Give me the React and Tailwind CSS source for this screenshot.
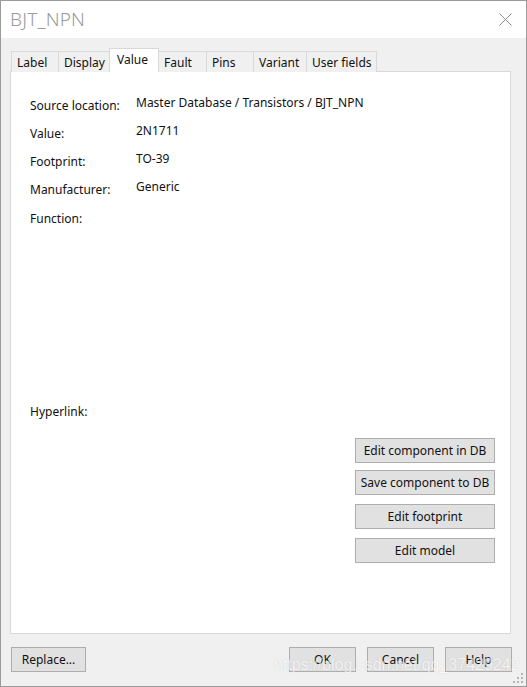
import React from 'react';

const tabs = ['Label', 'Display', 'Value', 'Fault', 'Pins', 'Variant', 'User fields'];
const tabWidths = ['w-[48px]', 'w-[52px]', 'w-[50px]', 'w-[49px]', 'w-[48px]', 'w-[54px]', 'w-[71px]'];

const fields = [
  { label: 'Source location:', value: 'Master Database / Transistors / BJT_NPN' },
  { label: 'Value:', value: '2N1711' },
  { label: 'Footprint:', value: 'TO-39' },
  { label: 'Manufacturer:', value: 'Generic' },
];

const Btn = ({ children, className }) => (
  <button className={`h-[25px] border border-[#adadad] bg-[#e1e1e1] text-[12px] text-[#111] flex items-center justify-center ${className}`}>
    {children}
  </button>
);

const App = () => {
  return (
    <div className="w-[527px] h-[687px] border border-[#9b9b9b] flex flex-col relative overflow-hidden font-['Noto_Sans',sans-serif] text-[12px] text-[#111]">
      {/* Title bar */}
      <div className="h-[37px] bg-white flex items-center justify-between pl-[9px] pr-[14px] shrink-0">
        <span className="text-[19px] font-light text-[#9a9a9a] tracking-[0.2px]">BJT_NPN</span>
        <svg width="13" height="13" viewBox="0 0 13 13">
          <path d="M0.5 0.5 L12.5 12.5 M12.5 0.5 L0.5 12.5" stroke="#8c8c8c" strokeWidth="1" />
        </svg>
      </div>

      {/* Body */}
      <div className="flex-1 bg-[#f0f0f0] pl-[9px] pr-[15px] pt-[10px] flex flex-col">
        {/* Tabs */}
        <div className="flex items-end h-[24px] pl-[1px] relative z-10">
          {tabs.map((t, i) =>
            t === 'Value' ? (
              <div key={t} className={`${tabWidths[i]} h-[24px] -ml-px bg-white border border-b-0 border-[#d9d9d9] flex items-center pl-[7px] pb-[2px] relative z-10`}>
                {t}
              </div>
            ) : (
              <div key={t} className={`${tabWidths[i]} h-[21px] bg-[#f0f0f0] border border-b-0 border-[#d9d9d9] -ml-px first:ml-0 flex items-center pl-[5px] pt-[1px]`}>
                {t}
              </div>
            )
          )}
        </div>

        {/* Panel */}
        <div className="h-[563px] -mt-px bg-white border border-[#d9d9d9] flex flex-col pl-[19px] pr-[15px] pt-[22px]">
          {fields.map((f) => (
            <div key={f.label} className="flex h-[28px]">
              <div className="w-[106px] pt-[3px]">{f.label}</div>
              <div>{f.value}</div>
            </div>
          ))}
          <div className="h-[197px] pt-[4px]">Function:</div>
          <div className="h-[16px]">Hyperlink:</div>
          <div className="flex flex-col items-end mt-[19px]">
            <Btn className="w-[140px]">Edit component in DB</Btn>
            <Btn className="w-[140px] mt-[7px]">Save component to DB</Btn>
            <Btn className="w-[140px] mt-[9px]">Edit footprint</Btn>
            <Btn className="w-[140px] mt-[9px]">Edit model</Btn>
          </div>
        </div>

        {/* Bottom buttons */}
        <div className="flex items-center mt-[13px] pl-[1px] -mr-px">
          <Btn className="w-[75px]">Replace...</Btn>
          <div className="flex-1" />
          <Btn className="w-[67px]">OK</Btn>
          <Btn className="w-[67px] ml-[11px]">Cancel</Btn>
          <Btn className="w-[67px] ml-[11px]">Help</Btn>
        </div>
      </div>

      {/* Watermark */}
      <div className="absolute left-[273px] top-[652px] text-[16px] text-white opacity-60 [text-shadow:0_0_1px_#aaa] font-['Liberation_Sans',sans-serif] pointer-events-none">
        https://blog.csdn.net/qq_37429242
      </div>

      {/* Resize grip */}
      <svg className="absolute right-[2px] bottom-[2px]" width="11" height="11" viewBox="0 0 11 11">
        <g fill="#b5b5b5">
          <rect x="8" y="0" width="2" height="2" />
          <rect x="4" y="4" width="2" height="2" />
          <rect x="8" y="4" width="2" height="2" />
          <rect x="0" y="8" width="2" height="2" />
          <rect x="4" y="8" width="2" height="2" />
          <rect x="8" y="8" width="2" height="2" />
        </g>
      </svg>
    </div>
  );
};

export default App;
